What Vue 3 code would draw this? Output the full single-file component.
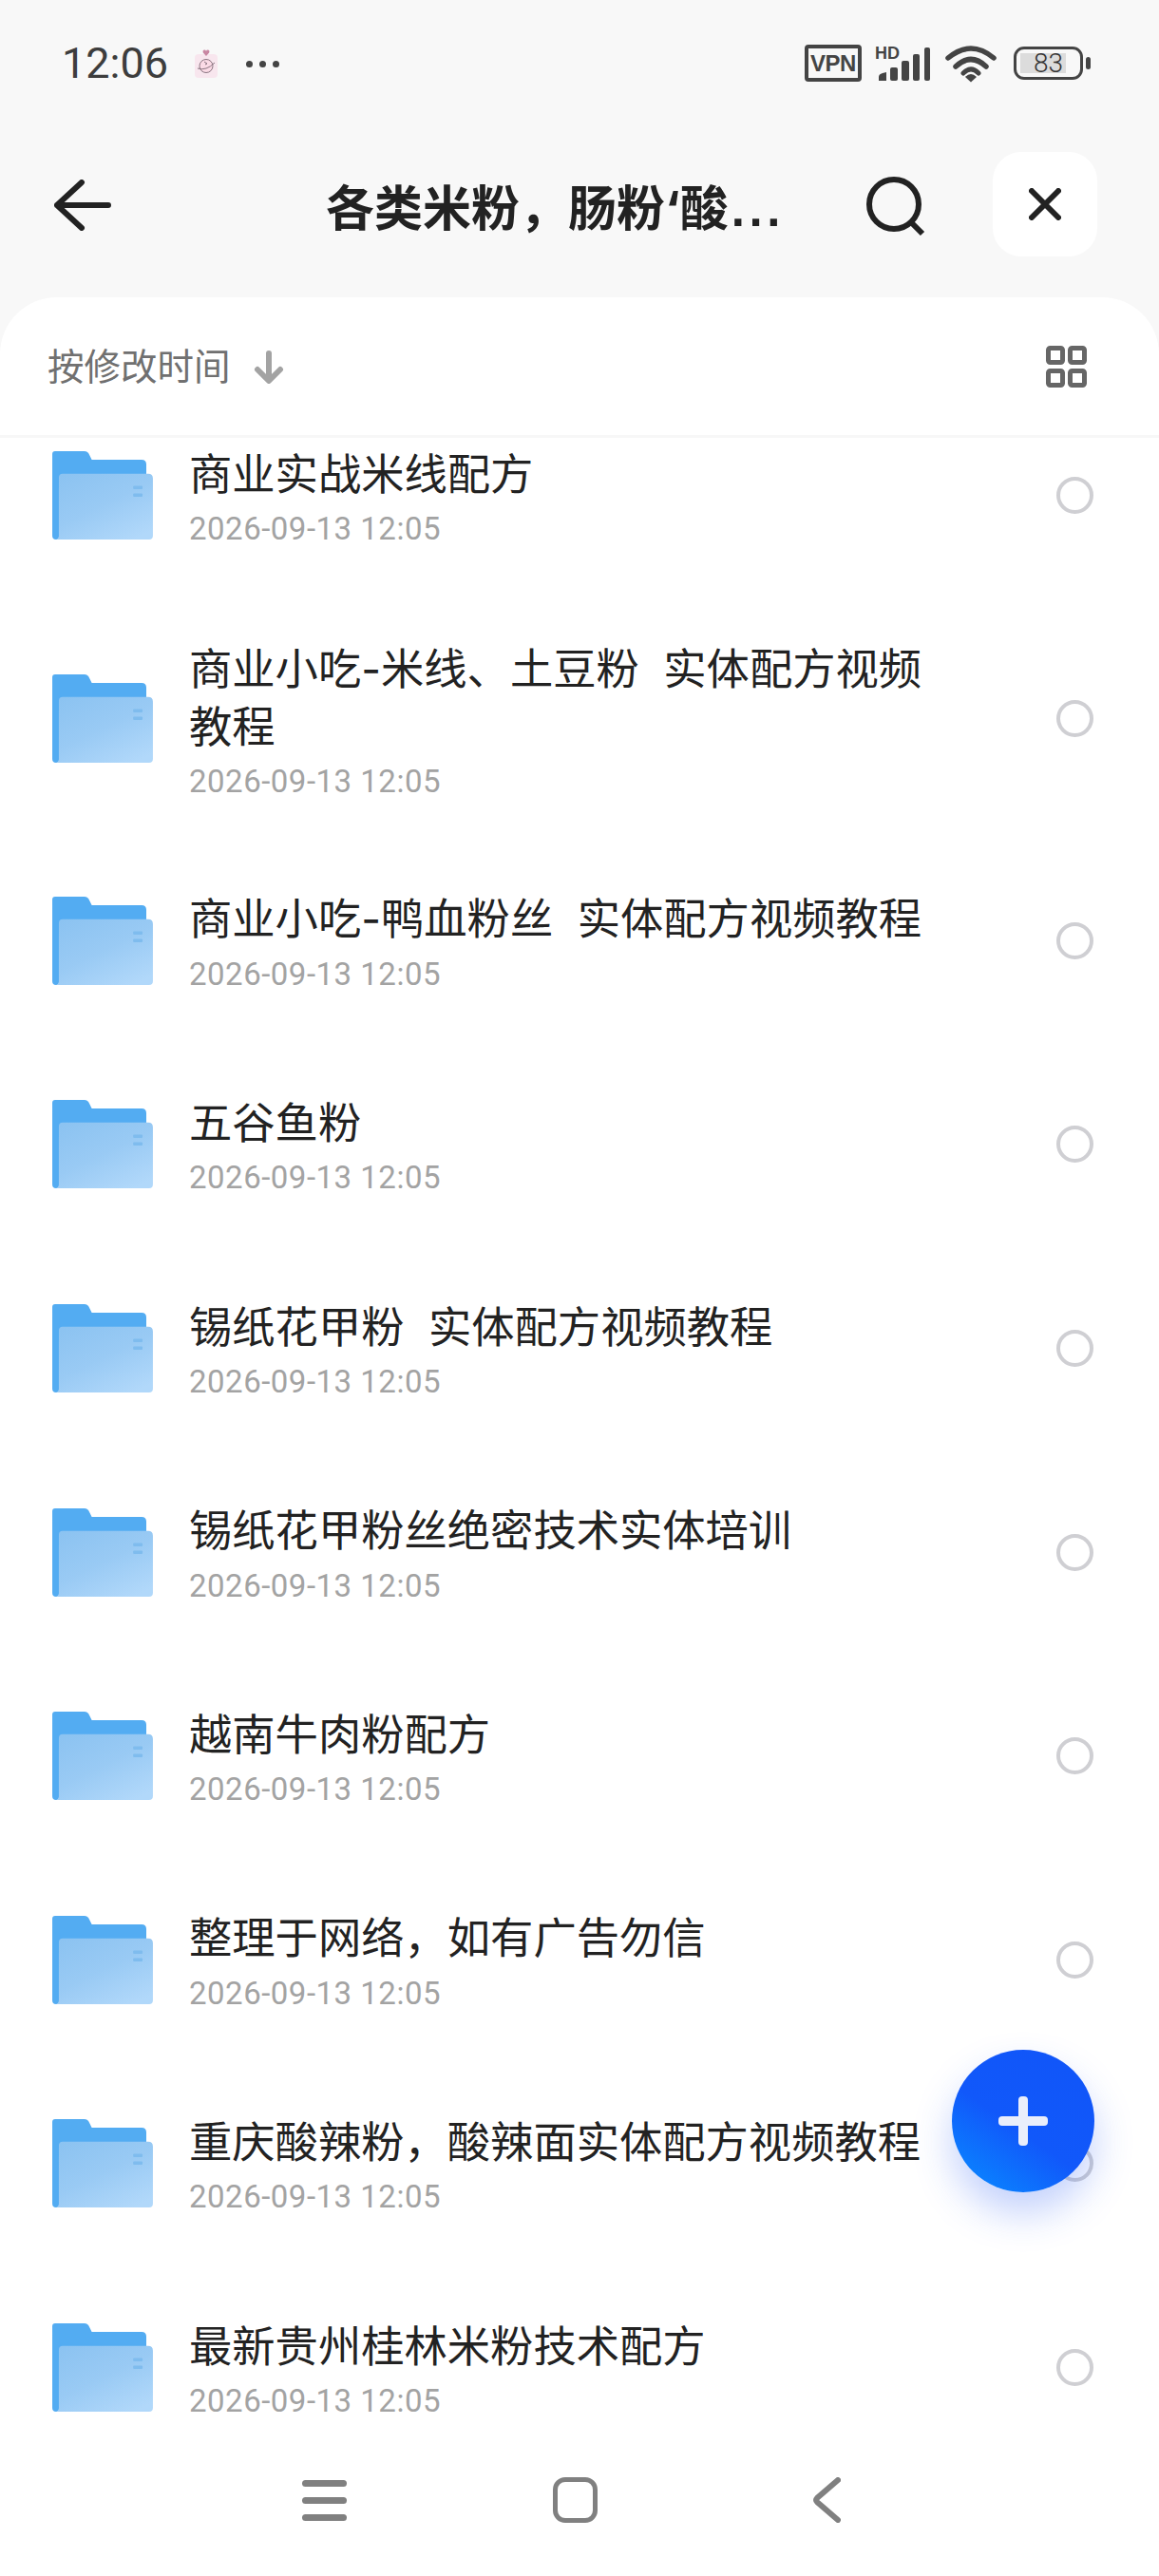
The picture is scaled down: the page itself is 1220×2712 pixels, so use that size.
<script setup>
const rows = [
  { name: '商业实战米线配方' },
  { name: '商业小吃-米线、土豆粉  实体配方视频教程', tall: true },
  { name: '商业小吃-鸭血粉丝  实体配方视频教程' },
  { name: '五谷鱼粉' },
  { name: '锡纸花甲粉  实体配方视频教程' },
  { name: '锡纸花甲粉丝绝密技术实体培训' },
  { name: '越南牛肉粉配方' },
  { name: '整理于网络，如有广告勿信' },
  { name: '重庆酸辣粉，酸辣面实体配方视频教程' },
  { name: '最新贵州桂林米粉技术配方' }
]
</script>

<template>
  <div class="page">
    <div class="status">
      <div class="status-left">
        <span class="time">12:06</span>
        <svg class="app-icon" width="24" height="30" viewBox="0 0 24 30">
          <path d="M4 5h16q4 0 4 4v17q0 4-4 4H4q-4 0-4-4V9q0-4 4-4z" fill="#f8e6ee"/>
          <path d="M12 7 8.800 3.600Q8 .5 10.300.5 11.500.5 12 1.700 12.500.5 13.700.5 16 .5 15.200 3.600z" fill="#c987a3"/>
          <circle cx="12" cy="17.500" r="7" fill="#fbdbe6" stroke="#8a7480" stroke-width="1"/>
          <path d="M3 20q9 3 18-6M10 13l3 2-2 1" fill="none" stroke="#8a7480" stroke-width="1"/>
        </svg>
        <span class="dots"><i></i><i></i><i></i></span>
      </div>
      <div class="status-right">
        <span class="vpn">VPN</span>
        <svg width="60" height="40" viewBox="0 0 60 40" class="signal">
          <text x="0" y="15" font-family="Liberation Sans" font-size="18" font-weight="700" fill="#444">HD</text>
          <path d="M4 38V34Q4 31 8 30L12 29V38z" fill="#444"/>
          <rect x="16" y="24" width="8" height="14" rx="2" fill="#444"/>
          <rect x="28" y="17" width="8" height="21" rx="2" fill="#444"/>
          <rect x="40" y="10" width="7" height="28" rx="2" fill="#444"/>
          <rect x="52" y="3" width="6" height="35" rx="2" fill="#444"/>
        </svg>
        <svg width="54" height="40" viewBox="0 0 54 40" class="wifi">
          <path d="M3 14Q27-6 51 14" fill="none" stroke="#444" stroke-width="5.500" stroke-linecap="round"/>
          <path d="M11 23Q27 8 43 23" fill="none" stroke="#444" stroke-width="5.500" stroke-linecap="round"/>
          <path d="M19 30Q27 22 35 30" fill="none" stroke="#444" stroke-width="5" stroke-linecap="round"/>
          <path d="M27 39.500 21 34Q27 28 33 34z" fill="#444"/>
        </svg>
        <div class="battery">
          <span class="battery-body"><span class="battery-fill"></span><span class="battery-num">83</span></span>
          <span class="battery-nub"></span>
        </div>
      </div>
    </div>

    <div class="header">
      <svg class="back" width="60" height="54" viewBox="0 0 60 54">
        <path d="M3 27H57M29 3 3 27 29 51" fill="none" stroke="#222" stroke-width="6" stroke-linecap="round" stroke-linejoin="round"/>
      </svg>
      <div class="title">各类米粉，肠粉‘酸<span class="ell">...</span></div>
      <svg class="search" width="64" height="64" viewBox="0 0 64 64">
        <circle cx="29" cy="29" r="26" fill="none" stroke="#222" stroke-width="6"/>
        <path d="M48 49 59 60" stroke="#222" stroke-width="6"/>
      </svg>
      <div class="close">
        <svg width="34" height="34" viewBox="0 0 34 34">
          <path d="M3 3 31 31M31 3 3 31" stroke="#222" stroke-width="6" stroke-linecap="round"/>
        </svg>
      </div>
    </div>

    <div class="sheet">
      <div class="sort">
        <div class="sort-left">
          <span class="sort-text">按修改时间</span>
          <svg width="32" height="36" viewBox="0 0 32 36">
            <path d="M16 4V32M4 21 16 33 28 21" fill="none" stroke="#a3a3a3" stroke-width="6" stroke-linecap="round" stroke-linejoin="round"/>
          </svg>
        </div>
        <svg class="grid-icon" width="43" height="44" viewBox="0 0 43 44">
          <rect x="2.500" y="2.500" width="15" height="15" rx="2" fill="none" stroke="#666" stroke-width="5"/>
          <rect x="25.500" y="2.500" width="15" height="15" rx="2" fill="none" stroke="#666" stroke-width="5"/>
          <rect x="2.500" y="26.500" width="15" height="15" rx="2" fill="none" stroke="#666" stroke-width="5"/>
          <rect x="25.500" y="26.500" width="15" height="15" rx="2" fill="none" stroke="#666" stroke-width="5"/>
        </svg>
      </div>

      <div class="list">
        <div class="list-inner">
          <div v-for="r in rows" :key="r.name" class="row" :class="{ tall: r.tall }">
            <svg class="folder" width="107" height="95" viewBox="0 0 108 96">
              <defs>
                <linearGradient id="ff" x1="0.1" y1="0" x2="0.8" y2="1">
                  <stop offset="0" stop-color="#8cc3f1"/>
                  <stop offset="0.5" stop-color="#99caf4"/>
                  <stop offset="1" stop-color="#b1d8fa"/>
                </linearGradient>
              </defs>
              <path d="M4 1H35Q39 1 40.500 5L43 10H96Q101 10 101 15V40H8V92Q8 95 5 95 1 95 1 91V4Q1 1 4 1z" fill="#53acf2"/>
              <path d="M12 25H103Q108 25 108 30V91Q108 95 104 95H5Q8 95 8 91V29Q8 25 12 25z" fill="url(#ff)"/>
              <rect x="87" y="38" width="10" height="3.500" rx="1" fill="#7fbcee"/>
              <rect x="87" y="46" width="10" height="3.500" rx="1" fill="#7fbcee"/>
            </svg>
            <div class="text">
              <div class="name">{{ r.name }}</div>
              <div class="date">2026-09-13 12:05</div>
            </div>
            <span class="radio"></span>
          </div>
        </div>
      </div>

      <div class="nav">
        <span class="menu"><i></i><i></i><i></i></span>
        <span class="home"></span>
        <svg width="30" height="48" viewBox="0 0 30 48">
          <path d="M27 3 5 22Q3 24 5 26L27 45" fill="none" stroke="#808080" stroke-width="6" stroke-linecap="round"/>
        </svg>
      </div>

      <div class="fab">
        <span class="plus"></span>
      </div>
    </div>
  </div>
</template>

<style>
html, body { margin: 0; padding: 0; background: #fff; }
</style>

<style scoped>
.page {
  width: 1220px;
  height: 2712px;
  display: flex;
  flex-direction: column;
  background: #f8f8f8;
  overflow: hidden;
  font-family: Inter, "Noto Sans CJK SC", "Noto Sans", sans-serif;
}
.status {
  height: 134px;
  padding: 0 72px 0 65px;
  box-sizing: border-box;
  display: flex;
  justify-content: space-between;
  align-items: flex-start;
  flex: none;
}
.status-left { display: flex; align-items: center; margin-top: 41px; height: 52px; }
.time { font: 400 45px/52px Roboto, sans-serif; color: #3d3d3d; }
.app-icon { margin-left: 28px; }
.dots { display: flex; gap: 7px; margin-left: 30px; }
.dots i { width: 7px; height: 7px; border-radius: 50%; background: #444; }
.status-right { display: flex; align-items: flex-start; margin-top: 47px; }
.vpn {
  width: 60px; height: 39px; box-sizing: border-box;
  border: 4px solid #444; border-radius: 4px;
  font: 700 24px/31px "Liberation Sans", sans-serif;
  color: #444; text-align: center;
  letter-spacing: -0.5px;
}
.signal { margin-left: 14px; }
.wifi { margin-left: 14px; }
.battery { display: flex; align-items: center; margin-left: 18px; height: 35px; margin-top: 2px; }
.battery-body {
  position: relative;
  width: 73px; height: 35px; box-sizing: border-box;
  border: 3px solid #444; border-radius: 11px; display: block;
}
.battery-fill { position: absolute; left: 4px; top: 4px; width: 48px; height: 21px; background: #dcdcdc; }
.battery-num { position: absolute; left: 18px; top: -1px; font: 300 28px/31px Roboto, sans-serif; color: #333; }
.battery-nub { width: 5px; height: 13px; background: #444; border-radius: 3px; margin-left: 3px; }

.header {
  flex: none;
  height: 179px;
  padding: 26px 65px 0 57px;
  box-sizing: border-box;
  display: flex;
  align-items: flex-start;
}
.back { margin-top: 29px; flex: none; }
.title {
  margin-left: 226px;
  width: 477px;
  flex: none;
  font-size: 51px;
  font-weight: 700;
  line-height: 120px;
  height: 110px;
  color: #222;
  white-space: nowrap;
}
.ell { font-family: "Liberation Sans", sans-serif; letter-spacing: 4.500px; margin-left: 3px; }
.search { margin-left: 92px; margin-top: 26px; flex: none; }
.close {
  margin-left: 69px;
  width: 110px; height: 110px;
  border-radius: 30px;
  background: #fff;
  display: flex; align-items: center; justify-content: center;
  flex: none;
}

.sheet {
  position: relative;
  flex: 1;
  min-height: 0;
  display: flex;
  flex-direction: column;
  background: #fff;
  border-radius: 60px 60px 0 0;
  overflow: hidden;
}
.sort {
  flex: none;
  height: 148px;
  box-sizing: border-box;
  padding: 0 76px 0 50px;
  border-bottom: 3px solid #f7f7f7;
  display: flex;
  justify-content: space-between;
  align-items: center;
}
.sort-left { display: flex; align-items: center; gap: 24px; }
.sort-text { font-size: 38.500px; line-height: 50px; color: #707070; }
.list { flex: 1; min-height: 0; overflow: hidden; }
.list-inner { margin-top: -46.500px; }
.row {
  height: 214.600px;
  display: flex;
  align-items: center;
  padding: 0 69px 0 54px;
  box-sizing: border-box;
}
.row.tall { height: 254px; }
.folder { flex: none; }
.text { margin-left: 38px; width: 810px; flex: none; padding-top: 2.500px; }
.row.tall .text { padding-top: 5px; }
.name {
  font-size: 45.300px;
  line-height: 61px;
  color: #222;
  white-space: pre-wrap;
}
.date {
  margin-top: 7.500px;
  font: 400 33px/40px Roboto, sans-serif;
  letter-spacing: 0.5px;
  color: #a3a3a3;
}
.radio {
  margin-left: auto;
  width: 39px; height: 39px; box-sizing: border-box;
  border: 4px solid #cfcfd3;
  border-radius: 50%;
  flex: none;
}
.nav {
  flex: none;
  height: 152px;
  position: relative;
  background: #fff;
  display: flex;
  align-items: center;
  padding: 0 0 8px 318px;
  box-sizing: border-box;
}
.menu { display: flex; flex-direction: column; gap: 11px; width: 47px; }
.menu i { height: 7px; border-radius: 3.500px; background: #808080; }
.home {
  margin-left: 217px;
  width: 47px; height: 48px; box-sizing: border-box;
  border: 5.500px solid #808080;
  border-radius: 13px;
}
.nav svg { margin-left: 226px; }
.fab {
  position: absolute;
  left: 1002px;
  top: 1845px;
  width: 150px;
  height: 150px;
  border-radius: 50%;
  background: linear-gradient(215deg, #1155f8 0%, #1158fa 55%, #0a85ff 92%);
  box-shadow: 0 22px 40px rgba(40, 90, 245, 0.28);
  display: flex;
  align-items: center;
  justify-content: center;
}
.plus { position: relative; width: 52px; height: 52px; }
.plus::before, .plus::after {
  content: "";
  position: absolute;
  background: #e9eefb;
  border-radius: 4px;
}
.plus::before { left: 0; top: 21px; width: 52px; height: 10px; }
.plus::after { left: 21px; top: 0; width: 10px; height: 52px; }
</style>
